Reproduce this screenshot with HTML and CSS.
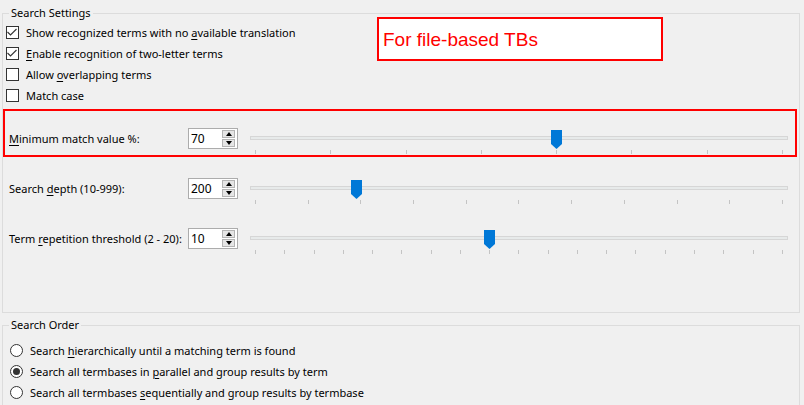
FILE: index.html
```html
<!DOCTYPE html>
<html lang="en">
<head>
  <meta charset="UTF-8" />
  <title>Search Settings</title>
  <link rel="stylesheet" href="styles.css">
</head>
<body>
  <!-- Search Settings group -->
  <fieldset class="group settings">
    <legend>Search Settings</legend>

    <div class="check-list">
      <div class="check-row">
        <span class="box">
          <svg width="13" height="13" viewBox="0 0 13 13"><polyline points="1.5,6 4.5,9 10.5,3" fill="none" stroke="#333" stroke-width="1.1"/></svg>
        </span>
        <span>Show recognized terms with no <u>a</u>vailable translation</span>
      </div>
      <div class="check-row">
        <span class="box">
          <svg width="13" height="13" viewBox="0 0 13 13"><polyline points="1.5,6 4.5,9 10.5,3" fill="none" stroke="#333" stroke-width="1.1"/></svg>
        </span>
        <span><u>E</u>nable recognition of two-letter terms</span>
      </div>
      <div class="check-row">
        <span class="box"></span>
        <span>Allow <u>o</u>verlapping terms</span>
      </div>
      <div class="check-row">
        <span class="box"></span>
        <span>Match case</span>
      </div>
    </div>

    <div class="slider-list">
      <div class="slider-row marked">
        <label class="slider-label"><u>M</u>inimum match value %:</label>
        <div class="spin">
          <span class="spin-value">70</span>
          <span class="spin-buttons">
            <span class="spin-btn"><i class="arrow-up"></i></span>
            <span class="spin-btn"><i class="arrow-down"></i></span>
          </span>
        </div>
        <div class="slider">
          <div class="track"></div>
          <svg class="thumb" style="left: 301px" width="11" height="19" viewBox="0 0 11 19"><polygon points="0,0 11,0 11,14 5.5,19 0,14" fill="#0078d7"/></svg>
          <div class="ticks">
            <i></i><i></i><i></i><i></i><i></i><i></i><i></i><i></i>
          </div>
        </div>
      </div>

      <div class="slider-row">
        <label class="slider-label">Search <u>d</u>epth (10-999):</label>
        <div class="spin">
          <span class="spin-value">200</span>
          <span class="spin-buttons">
            <span class="spin-btn"><i class="arrow-up"></i></span>
            <span class="spin-btn"><i class="arrow-down"></i></span>
          </span>
        </div>
        <div class="slider">
          <div class="track"></div>
          <svg class="thumb" style="left: 101px" width="11" height="19" viewBox="0 0 11 19"><polygon points="0,0 11,0 11,14 5.5,19 0,14" fill="#0078d7"/></svg>
          <div class="ticks">
            <i></i><i></i><i></i><i></i><i></i><i></i><i></i><i></i><i></i><i></i><i></i>
          </div>
        </div>
      </div>

      <div class="slider-row">
        <label class="slider-label">Term <u>r</u>epetition threshold (2 - 20):</label>
        <div class="spin">
          <span class="spin-value">10</span>
          <span class="spin-buttons">
            <span class="spin-btn"><i class="arrow-up"></i></span>
            <span class="spin-btn"><i class="arrow-down"></i></span>
          </span>
        </div>
        <div class="slider">
          <div class="track"></div>
          <svg class="thumb" style="left: 234px" width="11" height="19" viewBox="0 0 11 19"><polygon points="0,0 11,0 11,14 5.5,19 0,14" fill="#0078d7"/></svg>
          <div class="ticks">
            <i></i><i></i><i></i><i></i><i></i><i></i><i></i><i></i><i></i><i></i>
            <i></i><i></i><i></i><i></i><i></i><i></i><i></i><i></i><i></i>
          </div>
        </div>
      </div>
    </div>

    <!-- Annotation note -->
    <div class="note">For file-based TBs</div>
  </fieldset>

  <!-- Search Order group -->
  <fieldset class="group order">
    <legend>Search Order</legend>
    <div class="radio-list">
      <div class="radio-row">
        <span class="radio"></span>
        <span>Search <u>h</u>ierarchically until a matching term is found</span>
      </div>
      <div class="radio-row">
        <span class="radio checked"></span>
        <span>Search all termbases in <u>p</u>arallel and group results by term</span>
      </div>
      <div class="radio-row">
        <span class="radio"></span>
        <span>Search all termbases <u>s</u>equentially and group results by termbase</span>
      </div>
    </div>
  </fieldset>
</body>
</html>
```

FILE: styles.css
```css
/* Base */
* {
  box-sizing: border-box;
}
html,
body {
  height: 405px;
  overflow: hidden;
}
body {
  margin: 0;
  font-family: "Noto Sans", sans-serif;
  font-size: 11px;
  color: #000;
  background-color: #f0f0f0;
}
u {
  text-decoration-thickness: 1px;
  text-underline-offset: 2px;
}

/* Group boxes */
.group {
  position: relative;
  margin: 0 4px 0 2px;
  padding: 0;
  border: 1px solid #dcdcdc;
  min-width: 0;
}
.group legend {
  margin-left: 6px;
  padding: 0 2px;
  line-height: 16px;
  font-size: 11px;
}
.settings {
  margin-top: 5px;
  height: 308px;
}
.order {
  margin-top: 4px;
  height: 90px;
}

/* Checkboxes */
.check-list {
  padding: 1px 0 0 3px;
}
.check-row {
  display: flex;
  align-items: center;
  gap: 7px;
  height: 21px;
}
.box {
  width: 13px;
  height: 13px;
  border: 1px solid #333;
  background-color: #fff;
  display: flex;
  align-items: center;
  justify-content: center;
}
.box svg {
  display: block;
  flex-shrink: 0;
}

/* Slider rows */
.slider-list {
  margin-top: 3px;
  display: flex;
  flex-direction: column;
  gap: 2px;
}
.slider-row {
  display: flex;
  align-items: flex-start;
  height: 48px;
  margin: 0 2px 0 0;
  padding: 17px 7px 0 4px;
  border: 2px solid transparent;
}
.slider-row.marked {
  border-color: #f00;
}
.slider-label {
  width: 179px;
  line-height: 21px;
  white-space: nowrap;
}

/* Spin box */
.spin {
  width: 50px;
  height: 21px;
  border: 1px solid #acacac;
  background-color: #fff;
  display: flex;
  align-items: center;
  padding-left: 2px;
}
.spin-value {
  flex: 1;
  line-height: 19px;
  font-size: 12px;
}
.spin-buttons {
  display: flex;
  flex-direction: column;
  gap: 1px;
  margin-right: 2px;
}
.spin-btn {
  width: 13px;
  height: 8px;
  border: 1px solid #b4b4b4;
  background-color: #e5e5e5;
  display: flex;
  align-items: center;
  justify-content: center;
}
.arrow-up,
.arrow-down {
  width: 0;
  height: 0;
  border-left: 3.5px solid transparent;
  border-right: 3.5px solid transparent;
}
.arrow-up {
  border-bottom: 4px solid #000;
}
.arrow-down {
  border-top: 4px solid #000;
}

/* Slider */
.slider {
  position: relative;
  width: 538px;
  margin-left: 12px;
}
.track {
  margin-top: 8px;
  height: 4px;
  background-color: #e7eaea;
  border: 1px solid #d6d6d6;
}
.thumb {
  position: absolute;
  top: 2px;
  display: block;
}
.ticks {
  display: flex;
  justify-content: space-between;
  margin-top: 10px;
  padding: 0 5px;
}
.ticks i {
  width: 1px;
  height: 4px;
  background-color: #c4c4c4;
}

/* Annotation */
.note {
  position: absolute;
  left: 374px;
  top: -4px;
  width: 286px;
  height: 44px;
  border: 2px solid #f00;
  background-color: #fff;
  color: #f00;
  font-family: "Liberation Sans", Arial, sans-serif;
  font-size: 19px;
  line-height: 38px;
  padding: 2px 0 0 4px;
}

/* Radio buttons */
.radio-list {
  padding: 7px 0 0 7px;
}
.radio-row {
  display: flex;
  align-items: center;
  gap: 7px;
  height: 21px;
}
.radio {
  width: 13px;
  height: 13px;
  border: 1px solid #333;
  border-radius: 50%;
  background-color: #fff;
  display: flex;
  align-items: center;
  justify-content: center;
}
.radio.checked::after {
  content: "";
  width: 7px;
  height: 7px;
  border-radius: 50%;
  background-color: #333;
}
```
